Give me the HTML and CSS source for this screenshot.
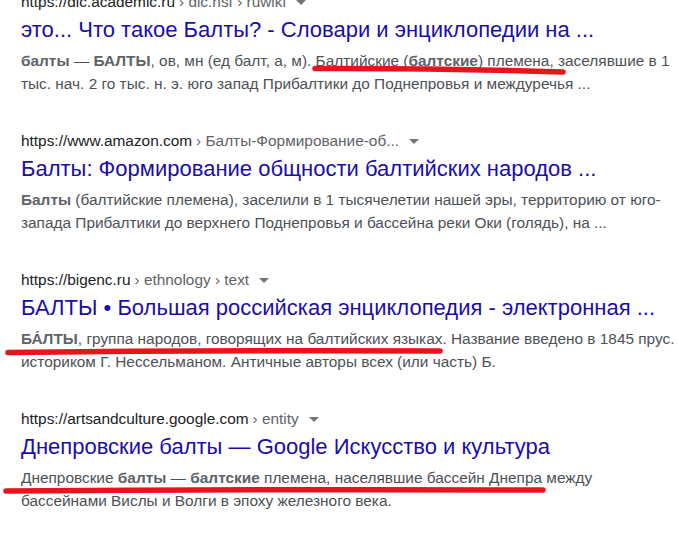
FILE: index.html
```html
<!DOCTYPE html>
<html lang="ru">
<head>
    <meta charset="UTF-8">
    <title>балты - Поиск</title>
    <link rel="stylesheet" href="styles.css">
</head>
<body>
    <div class="results">
        <div class="result">
            <div class="url">https://dic.academic.ru <span class="crumbs">› dic.nsf › ruwiki</span><span class="arrow"></span></div>
            <a class="title" href="#">это... Что такое Балты? - Словари и энциклопедии на ...</a>
            <div class="snippet"><b>балты</b> — <b>БАЛТЫ</b>, ов, мн (ед балт, а, м). Балтийские (<b>балтские</b>) племена, заселявшие в 1 тыс. нач. 2 го тыс. н. э. юго запад Прибалтики до Поднепровья и междуречья ...</div>
        </div>

        <div class="result">
            <div class="url">https://www.amazon.com <span class="crumbs">› Балты-Формирование-об...</span><span class="arrow"></span></div>
            <a class="title" href="#">Балты: Формирование общности балтийских народов ...</a>
            <div class="snippet"><b>Балты</b> (балтийские племена), заселили в 1 тысячелетии нашей эры, территорию от юго-запада Прибалтики до верхнего Поднепровья и бассейна реки Оки (голядь), на ...</div>
        </div>

        <div class="result">
            <div class="url">https://bigenc.ru <span class="crumbs">› ethnology › text</span><span class="arrow"></span></div>
            <a class="title" href="#">БАЛТЫ • Большая российская энциклопедия - электронная ...</a>
            <div class="snippet"><b>БА́ЛТЫ</b>, группа народов, говорящих на балтийских языках. Название введено в 1845 прус. историком Г. Нессельманом. Античные авторы всех (или часть) Б.</div>
        </div>

        <div class="result">
            <div class="url">https://artsandculture.google.com <span class="crumbs">› entity</span><span class="arrow"></span></div>
            <a class="title" href="#">Днепровские балты — Google Искусство и культура</a>
            <div class="snippet">Днепровские <b>балты</b> — <b>балтские</b> племена, населявшие бассейн Днепра между бассейнами Вислы и Волги в эпоху железного века.</div>
        </div>
    </div>

    <!-- красные подчёркивания поверх текста -->
    <svg class="marks" width="679" height="541" viewBox="0 0 679 541">
        <path d="M315 68.5 Q 440 68 563 72" />
        <path d="M8 352.5 Q 220 350 440 351" />
        <path d="M6 491 Q 270 489 543 490" />
    </svg>
</body>
</html>
```

FILE: styles.css
```css
* {
    margin: 0;
    padding: 0;
    box-sizing: border-box;
}

body {
    position: relative;
    font-family: "Liberation Sans", Arial, sans-serif;
    background: #ffffff;
    color: #202124;
    overflow: hidden;
    height: 541px;
}

.results {
    margin-top: -9px;
    padding: 0 3px 0 21px;
    display: flex;
    flex-direction: column;
    gap: 35px;
}

.url {
    font-size: 15.4px;
    line-height: 22px;
    color: #202124;
    white-space: nowrap;
    display: flex;
    align-items: center;
}

.crumbs {
    color: #5f6368;
    margin-left: 4px;
}

.arrow {
    width: 0;
    height: 0;
    margin-left: 10px;
    margin-top: 1px;
    border-left: 5px solid transparent;
    border-right: 5px solid transparent;
    border-top: 5px solid #70757a;
}

.title {
    display: block;
    margin-top: 3px;
    font-size: 22px;
    line-height: 28px;
    color: #1a0dab;
    text-decoration: none;
    white-space: nowrap;
}

.snippet {
    margin-top: 5px;
    font-size: 15.4px;
    line-height: 23px;
    color: #4d5156;
}

.snippet b {
    color: #5f6368;
}

.marks {
    position: absolute;
    top: 0;
    left: 0;
    pointer-events: none;
}

.marks path {
    fill: none;
    stroke: #e8131c;
    stroke-width: 5.5;
    stroke-linecap: round;
}
```
